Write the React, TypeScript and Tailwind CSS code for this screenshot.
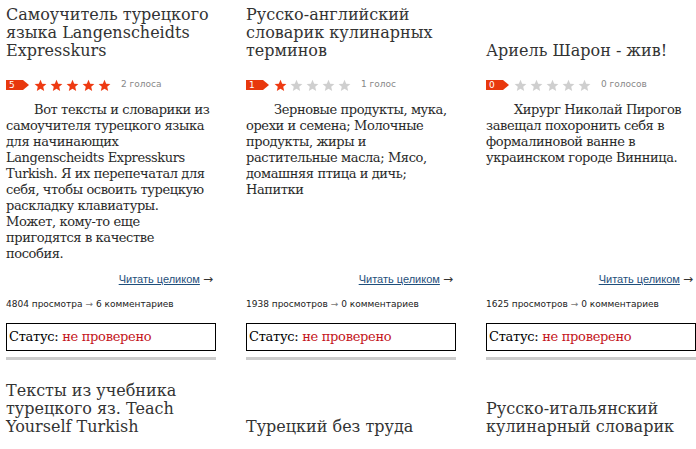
import React from "react";

const articles = [
  {
    title: "Самоучитель турецкого языка Langenscheidts Expresskurs",
    rating: 5,
    votes: "2 голоса",
    body: [
      "Вот тексты и словарики из самоучителя турецкого языка для начинающих Langenscheidts Expresskurs Turkish. Я их перепечатал для себя, чтобы освоить турецкую раскладку клавиатуры.",
      "Может, кому-то еще пригодятся в качестве",
      "пособия.",
    ],
    views: "4804 просмотра",
    comments: "6 комментариев",
  },
  {
    title: "Русско-английский словарик кулинарных терминов",
    rating: 1,
    votes: "1 голос",
    body: [
      "Зерновые продукты, мука, орехи и семена; Молочные продукты, жиры и растительные масла; Мясо, домашняя птица и дичь; Напитки",
    ],
    views: "1938 просмотров",
    comments: "0 комментариев",
  },
  {
    title: "Ариель Шарон - жив!",
    rating: 0,
    votes: "0 голосов",
    body: [
      "Хирург Николай Пирогов завещал похоронить себя в формалиновой ванне в украинском городе Винница.",
    ],
    views: "1625 просмотров",
    comments: "0 комментариев",
  },
];

const nextTitles = [
  "Тексты из учебника турецкого яз. Teach Yourself Turkish",
  "Турецкий без труда",
  "Русско-итальянский кулинарный словарик",
];

function Star({ on }: { on: boolean }) {
  return (
    <svg width="13" height="13" viewBox="0 0 24 24" className="shrink-0">
      <path
        d="M12 1.5l3.1 7.2 7.8.6-5.9 5.1 1.8 7.6L12 17.9 5.2 22l1.8-7.6L1.1 9.3l7.8-.6z"
        fill={on ? "#ee3a12" : "#cfcfcf"}
      />
    </svg>
  );
}

function Badge({ n }: { n: number }) {
  return (
    <div className="flex items-center h-[10px]">
      <div className="h-[10px] w-[17px] bg-[#e8380d] text-white text-[9px] leading-[10px] pl-[3px] font-['DejaVu_Sans',sans-serif]">
        {n}
      </div>
      <div className="w-0 h-0 border-y-[5px] border-y-transparent border-l-[6px] border-l-[#e8380d]" />
    </div>
  );
}

const titleCls =
  "font-['DejaVu_Serif',serif] text-[16px] leading-[18px] text-[#333] self-end";

export default function App() {
  return (
    <div className="w-[696px] h-[449px] overflow-hidden bg-white pl-[6px] pt-[6px]">
      <div className="grid grid-cols-[210px_210px_210px] gap-x-[30px]">
        {articles.map((a, i) => (
          <h2 key={"t" + i} className={titleCls}>
            {a.title}
          </h2>
        ))}
        {articles.map((a, i) => (
          <div key={"r" + i} className="flex items-center mt-[20px] h-[10px]">
            <Badge n={a.rating} />
            <div className="flex gap-[3px] ml-[5px]">
              {[0, 1, 2, 3, 4].map((k) => (
                <Star key={k} on={k < a.rating} />
              ))}
            </div>
            <span className="ml-[10px] text-[9px] text-[#888] font-['DejaVu_Sans',sans-serif]">
              {a.votes}
            </span>
          </div>
        ))}
        {articles.map((a, i) => (
          <p
            key={"b" + i}
            className="mt-[12px] indent-[28px] font-['DejaVu_Serif',serif] text-[13px] tracking-[-0.4px] leading-[16px] text-[#2a2a2a]"
          >
            {a.body.map((part, k) => (
              <React.Fragment key={k}>
                {k > 0 && <br />}
                {part}
              </React.Fragment>
            ))}
          </p>
        ))}
        {articles.map((a, i) => (
          <div
            key={"l" + i}
            className="mt-[10px] pr-[3px] text-right font-['Liberation_Sans',sans-serif] text-[11px] leading-[14px] text-[#333]"
          >
            <a href="#" className="underline text-[#1f4f7b]">
              Читать целиком
            </a>{" "}
            <span className="font-['DejaVu_Sans',sans-serif] text-[12px]">→</span>
          </div>
        ))}
        {articles.map((a, i) => (
          <div
            key={"s" + i}
            className="mt-[12px] font-['DejaVu_Sans',sans-serif] text-[9px] leading-[12px] text-[#222]"
          >
            {a.views} <span className="text-[#777]">→</span> {a.comments}
          </div>
        ))}
        {articles.map((a, i) => (
          <div
            key={"st" + i}
            className="mt-[13px] h-[28px] border border-black flex items-center px-[2px] font-['DejaVu_Serif',serif] text-[13px] tracking-[-0.3px] text-black"
          >
            Статус:&nbsp;<span className="text-[#c4161c]">не проверено</span>
          </div>
        ))}
        {articles.map((a, i) => (
          <div key={"bar" + i} className="mt-[6px] h-[3px] bg-[#cccccc]" />
        ))}
        {nextTitles.map((t, i) => (
          <h2 key={"n" + i} className={titleCls + " mt-[22px]"}>
            {t}
          </h2>
        ))}
      </div>
    </div>
  );
}
